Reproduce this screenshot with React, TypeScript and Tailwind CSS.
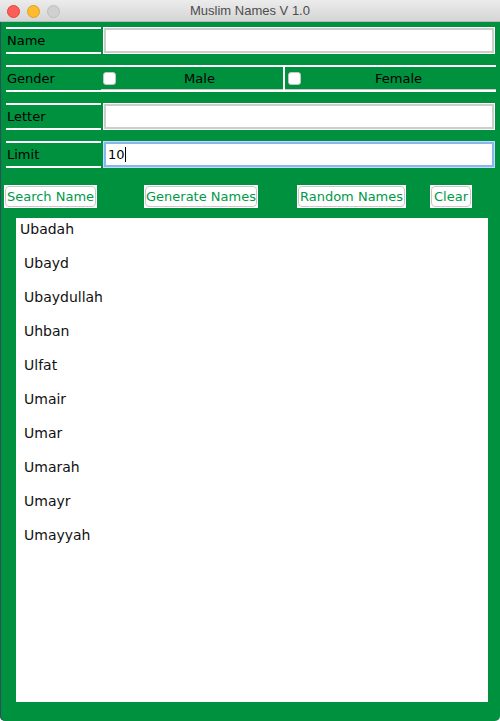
import React from "react";

const names = [
  "Ubayd",
  "Ubaydullah",
  "Uhban",
  "Ulfat",
  "Umair",
  "Umar",
  "Umarah",
  "Umayr",
  "Umayyah",
];

const TextRow = ({ label, children }: { label: string; children?: React.ReactNode }) => (
  <div className="flex h-[27px] pl-[6px] pr-[6px] mb-[11px]">
    <div className="w-[95px] border-y-2 border-white flex items-center pl-px text-[13px] text-black">
      {label}
    </div>
    <div className="ml-[3px] my-px flex-1 bg-white border-2 border-[#cdcdcd] shadow-[0_0_0_1px_#ffffff]">
      {children}
    </div>
  </div>
);

const Check = () => (
  <div className="w-[13px] h-[13px] bg-white rounded-[3px] border border-[#c4c4c4] shrink-0" />
);

const Btn = ({ text, w, ml }: { text: string; w: string; ml: string }) => (
  <div className={`h-[23px] bg-white p-px ${w} ${ml}`}>
    <div className="h-full rounded-[4px] border border-[#c9c9c9] flex items-center justify-center text-[13px] text-[#00994a]">
      {text}
    </div>
  </div>
);

export default function App() {
  return (
    <div
      className="w-[500px] h-[721px] flex flex-col overflow-hidden rounded-b-[5px] bg-[#00913f] shadow-[inset_1px_0_0_#2c4f5e]"
      style={{ fontFamily: '"DejaVu Sans", sans-serif' }}
    >
      {/* title bar */}
      <div className="h-[22px] relative flex items-center justify-center bg-gradient-to-b from-[#ececec] to-[#d5d5d5] border-b border-[#b9b9b9]">
        <div className="absolute left-[7px] top-[5px] flex gap-[7px]">
          <div className="w-[13px] h-[13px] rounded-full bg-[#fc5f57] border border-[#e0443e]" />
          <div className="w-[13px] h-[13px] rounded-full bg-[#fdbc2e] border border-[#dea123]" />
          <div className="w-[13px] h-[13px] rounded-full bg-[#d0d0d0] border border-[#bdbdbd]" />
        </div>
        <span
          className="text-[13px] text-[#4d4d4d] pt-px"
          style={{ fontFamily: '"Liberation Sans", Arial, sans-serif' }}
        >
          Muslim Names V 1.0
        </span>
      </div>

      <div className="flex flex-col pt-[5px]">
        <TextRow label="Name" />

        {/* gender */}
        <div className="flex h-[27px] pl-[6px] pr-[4px] mb-[11px] text-[13px] text-black">
          <div className="w-[95px] border-y-2 border-white flex items-center pl-px">Gender</div>
          <div className="w-[182px] flex items-center border-t-2 border-b-2 border-white shadow-[inset_0_-1px_0_#c8c8c8] pl-[2px]">
            <Check />
            <span className="flex-1 text-center">Male</span>
          </div>
          <div className="w-[2px] bg-white" />
          <div className="flex-1 flex items-center border-t-2 border-b-2 border-white shadow-[inset_0_-1px_0_#c8c8c8] pl-[3px]">
            <Check />
            <span className="flex-1 text-center">Female</span>
          </div>
        </div>

        <TextRow label="Letter" />

        {/* limit */}
        <div className="flex h-[27px] pl-[6px] pr-[6px]">
          <div className="w-[95px] border-y-2 border-white flex items-center pl-px text-[13px] text-black">
            Limit
          </div>
          <div className="ml-[3px] my-px flex-1 bg-white border-2 border-[#88b7f0] shadow-[0_0_0_1px_#c3dbf7] flex items-center pl-[2px] text-[13px] text-black">
            10
            <span className="inline-block w-px h-[15px] bg-black" />
          </div>
        </div>

        {/* buttons */}
        <div className="flex mt-[17px] pl-[4px]">
          <Btn text="Search Name" w="w-[93px]" ml="ml-0" />
          <Btn text="Generate Names" w="w-[114px]" ml="ml-[47px]" />
          <Btn text="Random Names" w="w-[109px]" ml="ml-[39px]" />
          <Btn text="Clear" w="w-[42px]" ml="ml-[24px]" />
        </div>

        {/* list */}
        <div className="mt-[10px] ml-[16px] w-[472px] h-[484px] bg-white text-[14px] text-[#111111]">
          <div className="h-[22px] flex items-center pl-[4px]">Ubadah</div>
          <div className="mt-[6px]">
            {names.map((n) => (
              <div key={n} className="h-[34px] flex items-center pl-[8px]">
                {n}
              </div>
            ))}
          </div>
        </div>
      </div>
    </div>
  );
}
